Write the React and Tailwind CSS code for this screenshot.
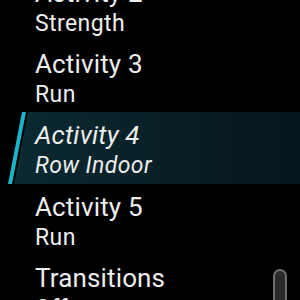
export default function App() {
  const rows = [
    { t: "Activity 2", s: "Strength" },
    { t: "Activity 3", s: "Run" },
    { t: "Activity 4", s: "Row Indoor", sel: true },
    { t: "Activity 5", s: "Run" },
    { t: "Transitions", s: "Off" },
  ];
  return (
    <div
      className="relative w-[300px] h-[300px] overflow-hidden bg-black"
      style={{ fontFamily: "Roboto, 'Noto Sans', sans-serif" }}
    >
      <div className="flex flex-col mt-[-30px]">
        {rows.map((r, i) => (
          <div key={i} className={"relative shrink-0 " + (r.sel ? "h-[72px]" : "h-[71px]")}>
            {r.sel && (
              <>
                <div
                  className="absolute inset-0 bg-gradient-to-r from-[#0b2b33] to-[#06151b]"
                  style={{ clipPath: "polygon(28px 0, 100% 0, 100% 100%, 14px 100%)" }}
                />
                <div
                  className="absolute inset-0 bg-[#1cb4cc]"
                  style={{ clipPath: "polygon(22px 0, 26px 0, 12px 100%, 8px 100%)" }}
                />
              </>
            )}
            <div className={"relative pl-[35px] pt-[8px] text-[#ededed] " + (r.sel ? "italic" : "")}>
              <div className="text-[26px] leading-[30px] tracking-[0.15px]">{r.t}</div>
              <div className="text-[23px] leading-[32px] tracking-[0.4px]">{r.s}</div>
            </div>
          </div>
        ))}
      </div>
      <div className="absolute left-[273px] top-[269px] w-[14px] h-[60px] rounded-full border-2 border-[#6e6e6e] bg-[#2a2a2a]" />
    </div>
  );
}
